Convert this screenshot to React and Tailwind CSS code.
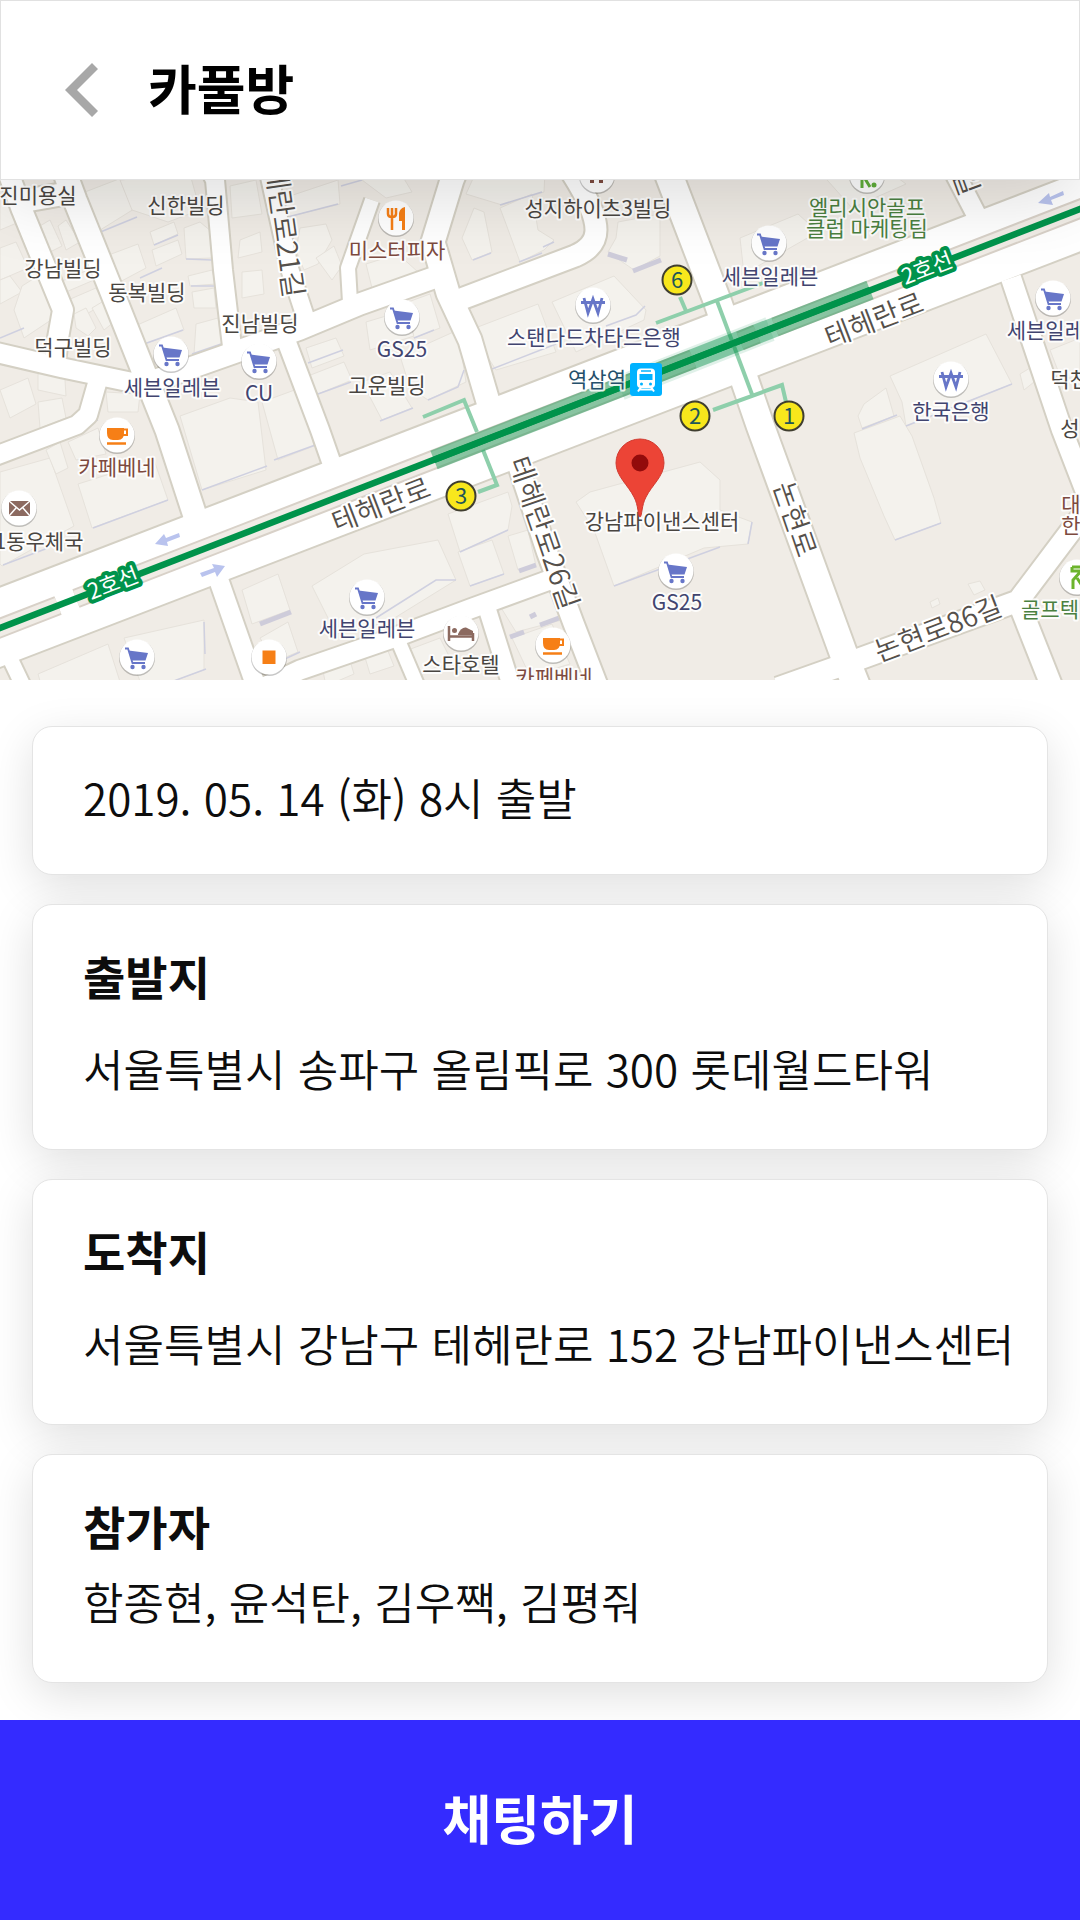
const ROADS = [
  { d: "M8 -8L22 30L63 130L58 158L54 190", w: 20 },
  { d: "M18 22L75 12", w: 22 },
  { d: "M62 -15L75 20L110 107L143 190L167 250L197 342", w: 23 },
  { d: "M-10 171L63 188L130 202L150 202", w: 19 },
  { d: "M98 200L88 235L77 245L-10 278", w: 18 },
  { d: "M145 204L233 173L300 149L360 124L436 97", w: 21 },
  { d: "M210 -10L215 0L223 90L233 175", w: 18 },
  { d: "M286 160L320 250L334 290", w: 18 },
  { d: "M268 -10L290 90L308 145", w: 17 },
  { d: "M372 20L348 88L350 122", w: 14 },
  { d: "M456 -10L452 0L433 62L448 113L470 160L489 225", w: 23 },
  { d: "M448 124L575 76Q596 67 596 50Q596 30 570 -10", w: 21 },
  { d: "M667 -10L718 123L760 245L844 475L860 515", w: 27 },
  { d: "M518 285L547 372L573 442L600 512", w: 20 },
  { d: "M555 398L470 429L393 458L300 490L262 508", w: 19 },
  { d: "M486 425L512 508", w: 17 },
  { d: "M397 458L420 512", w: 14 },
  { d: "M218 398L258 512", w: 19 },
  { d: "M6 470L26 512", w: 15 },
  { d: "M778 508L840 486L1018 421L1070 352L1096 318", w: 21 },
  { d: "M1018 421L1054 512", w: 21 },
  { d: "M1011 98L1062 250L1086 312", w: 20 },
  { d: "M950 -16L978 38", w: 19 },
  { d: "M-20 455L1100 24", w: 74 },
];

const MEDIANS = ["M-10 452L58 425.500", "M76 418.500L693 179", "M740 161L757 154", "M775 147L1100 21"];

const BUILDINGS = [
  "85 12L137 -8L150 10L142 24L97 52L84 22", "120 0L190 -6L200 30L168 42L132 30",
  "33 50L50 40L62 66L46 74", "58 46L66 40L80 62L66 70", "0 18L12 12L24 40L0 50",
  "0 68L16 62L28 88L0 100", "0 100L10 96L22 112L0 124", "22 106L38 96L56 130L54 138L24 158L14 130",
  "68 120L96 108L104 124L76 140", "60 102L88 90L94 100L66 112", "74 134L86 128L96 148L88 156L76 148",
  "92 128L102 122L114 142L104 150", "106 76L138 64L146 88L116 104L110 96",
  "150 52L174 42L178 54L154 65", "152 70L178 60L182 74L156 86", "135 146L176 128L184 150L144 164",
  "184 48L200 42L212 52L212 78L186 79", "188 96L212 90L216 104L190 106", "192 112L214 108L216 128L194 128",
  "196 144L218 138L222 164L194 174", "230 6L256 0L262 34L232 38", "240 60L260 52L262 72L238 78",
  "242 92L262 90L264 114L242 118", "278 20L338 0L340 24L276 40", "300 48L326 44L332 60L318 84L304 90L296 70",
  "316 78L334 66L342 86L332 100", "38 194L64 184L66 216L38 210", "0 210L28 198L36 224L10 238",
  "38 222L62 218L66 238L40 248", "106 212L140 214L138 232L108 232", "180 236L230 218L258 222L266 290L202 310",
  "262 222L300 208L314 266L278 280", "306 168L336 158L344 176L312 188", "308 196L344 182L352 200L318 214",
  "362 0L400 -8L412 12L386 18", "366 84L398 74L418 92L372 108", "366 142L406 130L414 156L370 170",
  "408 122L430 114L440 148L414 158", "400 176L458 150L466 202L428 220L410 208",
  "362 202L390 192L412 228L382 240", "476 -8L545 -8L544 12L502 25L466 14",
  "474 28L484 32L492 72L472 80L462 58", "500 28L532 14L538 50L554 60L544 70L520 82L506 44",
  "618 42L660 34L660 76L634 90L608 72L616 58", "470 150L538 124L556 172L496 190",
  "552 122L614 96L646 130L644 140L576 172", "740 58L798 34L818 52L744 94",
  "820 -8L890 -8L906 4L852 28", "890 196L986 154L1012 204L906 246L902 222",
  "858 236L864 224L886 208L894 236L862 248", "1020 194L1030 188L1034 202L1024 210",
  "1050 170L1080 158V200L1060 196", "0 292L50 278L74 346L2 386L0 384", "46 270L60 262L68 288L56 294",
  "68 262L98 248L106 274L76 280", "78 304L154 280L168 320L92 348", "242 410L278 394L290 430L252 444",
  "260 458L288 442L298 472L274 482", "38 494L108 464L122 508H42", "124 458L204 440L204 490L144 512",
  "312 406L364 374L438 360L456 400L388 442L336 454", "448 334L508 312L512 326L508 350L460 372",
  "458 372L492 360L504 394L470 406", "508 356L528 350L536 386L518 390", "500 426L550 400L562 440L516 452",
  "512 458L552 444L570 484L530 496", "576 322L590 312L700 282L720 300L720 330L752 342L748 364L704 368L614 406L594 350",
  "854 253L900 236L912 256L934 318L941 343L895 360L884 336L860 278", "968 404L980 401L985 410L974 415",
  "930 422L938 418L940 424L932 428", "408 470L440 458L452 482L416 494", "364 474L386 466L394 486L370 494",
  "322 486L348 474L354 494L326 506",
];

const SHADES = [
  "M98 53L137 37", "M140 98L162 88", "M154 65L178 55", "M186 79L212 80", "M191 106L214 106", "M144 164L183 150",
  "M192 174L224 163", "M276 40L338 24", "M341 6L362 0", "M308 183L343 170", "M318 214L351 202", "M0 158L24 148",
  "M202 310L267 286", "M274 280L318 264", "M93 348L168 320", "M3 385L48 368", "M473 80L491 73", "M519 82L542 73",
  "M543 67L554 62", "M414 158L434 150", "M428 220L458 207L464 190", "M380 241L413 228", "M492 189L556 164",
  "M606 146L636 135L645 126", "M500 25L542 12", "M885 74L920 60", "M906 246L1012 204", "M862 249L897 235",
  "M895 360L941 343", "M614 406L720 367", "M752 342L748 364", "M376 438L436 400L456 400", "M460 372L508 350",
  "M470 406L504 394", "M204 442L205 474", "M144 512L206 489", "M274 484L300 472", "M62 248L98 240",
];

const STRONG_SHADES = ["M608 74L627 80", "M633 91L661 80", "M260 444L291 432", "M519 391L536 385", "M510 457L524 452", "M540 445L559 438", "M530 437L536 434"];

const PASSAGES = [
  "M680 117L686 131", "M656 143L763 103", "M717 121L753 217", "M713 230L782 205L786 222",
  "M423 237L464 220L477 252", "M483 270L497 305L478 312",
];

const INK = "#494541";
const NAVY = "#41446f";
const BROWN = "#7d4a3f";
const GREEN = "#4a8040";

const LABELS = [
  ["진미용실", 38, 15, INK], ["신한빌딩", 186, 25, INK], ["강남빌딩", 63, 88, INK], ["동복빌딩", 147, 112, INK],
  ["진남빌딩", 260, 143, INK], ["덕구빌딩", 73, 167, INK], ["세븐일레븐", 172, 207, NAVY], ["CU", 259, 213, NAVY],
  ["GS25", 402, 169, NAVY], ["고운빌딩", 387, 205, INK], ["미스터피자", 397, 70, BROWN],
  ["성지하이츠3빌딩", 598, 28, INK], ["스탠다드차타드은행", 594, 157, NAVY], ["역삼역", 597, 199, "#24506b"],
  ["엘리시안골프", 867, 27, GREEN], ["클럽 마케팅팀", 867, 48, GREEN], ["세븐일레븐", 770, 96, NAVY],
  ["세븐일레븐", 1055, 150, NAVY], ["한국은행", 951, 231, NAVY], ["덕천빌딩", 1089, 199, INK], ["성", 1070, 248, INK],
  ["대", 1071, 324, BROWN], ["한", 1071, 345, BROWN], ["골프텍", 1050, 429, GREEN], ["카페베네", 117, 287, BROWN],
  ["1동우체국", 39, 361, INK], ["세븐일레븐", 367, 448, NAVY], ["스타호텔", 461, 484, INK],
  ["카페베네", 554, 497, BROWN], ["강남파이낸스센터", 662, 341, INK], ["GS25", 677, 422, NAVY],
];

const ROAD_LABELS = [
  ["테헤란로", 874, 140, -21, 28], ["테헤란로", 381, 325, -21, 28], ["테헤란로26길", 544, 353, 71, 28],
  ["테헤란로21길", 283, 38, 82, 28], ["논현로", 795, 339, 71, 28], ["논현로86길", 938, 449, -21, 28], ["길", 966, 2, 70, 28],
];

const CARTS = [[171, 174], [259, 181], [402, 137], [769, 63], [1053, 118], [137, 477], [367, 417], [676, 391]];
const WONS = [[593, 125], [951, 199]];
const CUPS = [[117, 255], [553, 465]];
const EXITS = [["6", 677, 100], ["2", 695, 236], ["1", 789, 236], ["3", 461, 316]];

function Spot({ x, y, children }) {
  return (
    <g transform={`translate(${x} ${y})`}>
      <circle cy="1" r="18" fill="#000" opacity="0.22" />
      <circle r="17.500" fill="#fff" />
      {children}
    </g>
  );
}

function StreetMap() {
  return (
    <svg
      viewBox="0 0 1080 500"
      role="img"
      aria-label="강남파이낸스센터 주변 지도"
      className="block h-auto w-full bg-[#f0ece6] font-['Noto_Sans_CJK_KR','Noto_Sans',sans-serif]"
    >
      <g fill="#f4f2ed" stroke="#e6e2db" strokeWidth="1">
        {BUILDINGS.map((p) => <path key={p} d={`M${p}Z`} />)}
      </g>
      <g fill="none" stroke="#cfd0e0" strokeWidth="1.500">
        {SHADES.map((d) => <path key={d} d={d} />)}
      </g>
      <g fill="none" stroke="#ceccda" strokeWidth="5">
        {STRONG_SHADES.map((d) => <path key={d} d={d} />)}
      </g>
      <g fill="none" stroke="#d4d0c4" strokeLinejoin="round">
        {ROADS.map((r) => <path key={r.d} d={r.d} strokeWidth={r.w + 4} />)}
      </g>
      <g fill="none" stroke="#fff" strokeLinejoin="round">
        {ROADS.map((r) => <path key={r.d} d={r.d} strokeWidth={r.w} />)}
      </g>
      <g fill="none">
        {MEDIANS.map((d) => <path key={d} d={d} stroke="#d8d1c8" strokeWidth="20" />)}
        {MEDIANS.map((d) => <path key={d} d={d} stroke="#f0ece6" strokeWidth="16" />)}
      </g>
      <path d="M-5 450L1085 27" stroke="#00934b" strokeWidth="6.500" />
      <g fill="none" stroke="#8ecfab" strokeWidth="4">
        {PASSAGES.map((d) => <path key={d} d={d} />)}
      </g>
      <path d="M434 280L870 110" stroke="#008f46" strokeOpacity="0.43" strokeWidth="20" />
      <path d="M620 208L770 149" stroke="#008f46" strokeOpacity="0.12" strokeWidth="25" />
      <path d="M434 280L870 110" stroke="#00934b" strokeWidth="6.500" />

      <g fill="#b9c3ee">
        <path d="M155 364L164 354L166 358L179 353L180 357L167 362L168 366Z" />
        <path d="M225 386L212 384L214 388L200 393L202 397L215 392L217 397Z" />
        <path d="M1038 23L1049 13L1050 17L1063 11L1064 15L1051 20L1053 25Z" />
      </g>

      {ROAD_LABELS.map(([t, x, y, a, s]) => (
        <text key={t + x} transform={`translate(${x} ${y}) rotate(${a})`} y={10} fontSize={s} textAnchor="middle" fill="#55504b" fontWeight="350" stroke="#fff" strokeWidth="4" strokeLinejoin="round" paintOrder="stroke">
          {t}
        </text>
      ))}
      {[[927, 88], [113, 403]].map(([x, y]) => (
        <text key={x} transform={`translate(${x} ${y}) rotate(-21)`} y={8} fontSize={22} textAnchor="middle" fill="#fff" stroke="#00934b" strokeWidth="8" strokeLinejoin="round" paintOrder="stroke">
          2호선
        </text>
      ))}

      {CARTS.map(([x, y]) => (
        <Spot key={`${x}-${y}`} x={x} y={y}>
          <path d="M-12 -8.500H-9L-4.500 6H8" fill="none" stroke="#6776c8" strokeWidth="1.800" />
          <path d="M-8.500 -6.500L11 -4L8.500 3.500H-5.500Z" fill="#6776c8" />
          <circle cx="-4.500" cy="10" r="2.200" fill="#6776c8" />
          <circle cx="6.500" cy="10" r="2.200" fill="#6776c8" />
        </Spot>
      ))}
      {WONS.map(([x, y]) => (
        <Spot key={`${x}-${y}`} x={x} y={y}>
          <path d="M-9 -7L-5 8L0 -6L5 8L9 -7M-12 -2.500H12" fill="none" stroke="#6776c8" strokeWidth="2.800" />
        </Spot>
      ))}
      {CUPS.map(([x, y]) => (
        <Spot key={`${x}-${y}`} x={x} y={y}>
          <path d="M-10 -7H7V-2Q7 5 1 5H-4Q-10 5 -10 -2Z" fill="#f67f16" />
          <path d="M6 -5.500H10V0H6" fill="none" stroke="#f67f16" strokeWidth="2" />
          <path d="M-10 8.500H9" stroke="#f67f16" strokeWidth="2.500" />
        </Spot>
      ))}
      <Spot x={396} y={38}>
        <path d="M-8 -10V-4Q-8 -1 -4 -1Q0 -1 0 -4V-10M-4 -10V12" fill="none" stroke="#f67f16" strokeWidth="2.500" />
        <path d="M3 -5Q4 -10 9 -11V12H6V3H3Z" fill="#f67f16" />
      </Spot>
      <Spot x={19} y={328}>
        <path d="M-10 -7H11V8H-10Z" fill="#8c6a60" />
        <path d="M-10 -7L0.500 2L11 -7M-10 8L-3 0M11 8L4 0" fill="none" stroke="#fff" strokeWidth="1.500" />
      </Spot>
      <Spot x={269} y={477}>
        <path d="M-6.500 -6.500H6.500V7H-6.500Z" fill="#f67f16" />
      </Spot>
      <Spot x={461} y={453}>
        <path d="M-12 -7V8M-12 3.500H12M12 0V8" fill="none" stroke="#8c6a60" strokeWidth="2.500" />
        <path d="M-3 1Q0 -6 5 -5.500L12 -2V2H-3Z" fill="#8c6a60" />
        <circle cx="-6.500" cy="-2.500" r="2.500" fill="#8c6a60" />
      </Spot>
      <Spot x={597} y={-5}>
        <path d="M-5 0V8M4 0V8" stroke="#7d4a3f" strokeWidth="4" />
      </Spot>
      <Spot x={867} y={-5}>
        <path d="M-5 -3V13M-3 2L3 12" stroke="#5fae3a" strokeWidth="3" />
        <circle cx="7" cy="10" r="2.500" fill="#5fae3a" />
      </Spot>
      <Spot x={1077} y={397}>
        <path d="M-5 -10H6M-5 -10V-6H4L-4 3V12M0 1L6 10" fill="none" stroke="#6cb42d" strokeWidth="3" />
      </Spot>

      {EXITS.map(([n, x, y]) => (
        <g key={n}>
          <circle cx={x} cy={y} r="14.500" fill="#f8e71c" stroke="#3f3e30" strokeWidth="2" />
          <text x={x} y={y + 8} fontSize="22" textAnchor="middle" fill="#1f5558">{n}</text>
        </g>
      ))}

      {LABELS.map(([t, x, y, c]) => (
        <text key={t + x} x={x} y={y + 8} fontSize="21" textAnchor="middle" fill={c} stroke="#fff" strokeOpacity="0.850" strokeWidth="4" strokeLinejoin="round" paintOrder="stroke">
          {t}
        </text>
      ))}

      <g transform="translate(630 183)">
        <rect width="32" height="33" rx="3" fill="#00b2ff" />
        <path d="M11 5.500H21Q25 5.500 25 9.500V21Q25 25 21 25H11Q7 25 7 21V9.500Q7 5.500 11 5.500Z" fill="#fff" />
        <path d="M11 8H21" stroke="#00b2ff" strokeWidth="1.500" />
        <path d="M9.500 11H22.500V17H9.500Z" fill="#00b2ff" />
        <circle cx="11.500" cy="21" r="1.500" fill="#00b2ff" />
        <circle cx="20.500" cy="21" r="1.500" fill="#00b2ff" />
        <path d="M11 24L8 28.500M21 24L24 28.500M9.500 26.500H22.500" stroke="#fff" strokeWidth="2" />
      </g>

      <path d="M640 337C638 337 638.500 325 634 317C628 305 616 296 616 283A24 24 0 0 1 664 283C664 296 652 305 646 317C641.500 325 642 337 640 337Z" fill="#ec4436" stroke="#d13a30" strokeWidth="1" />
      <circle cx="640" cy="283" r="8.500" fill="#930b0b" />
    </svg>
  );
}

const CARD =
  "relative rounded-[20px] border border-[#e4e4e4] bg-white pr-6 pl-[50px] before:absolute before:inset-0 before:-z-10 before:rounded-[20px] before:shadow-[0_12px_46px_rgba(0,0,0,0.13)]";

function InfoCard({ title, children, gap }) {
  return (
    <section className={`${CARD} pt-10 pb-[51px]`}>
      <h2 className="text-[46px] leading-[60px] font-bold">{title}</h2>
      <p className={`${gap} text-[44px] leading-[60px] font-[350]`}>{children}</p>
    </section>
  );
}

export default function App() {
  return (
    <div className="flex min-h-screen flex-col bg-white font-['Noto_Sans_CJK_KR','Noto_Sans',sans-serif] text-[#0d0d0d]" lang="ko">
      <header className="relative z-10 flex h-[180px] items-center gap-[50px] border border-[#e1e1e1] bg-white px-16 shadow-[0_20px_70px_rgba(0,0,0,0.13)]">
        <button type="button" aria-label="뒤로" className="shrink-0">
          <svg viewBox="0 0 33 54" className="block h-[54px] w-[33px]" fill="#a8a8a8">
            <path d="M0 27L27 0L33 6L12 27L33 48L27 54Z" />
          </svg>
        </button>
        <h1 className="pb-1.5 text-[53px] leading-[72px] font-bold text-black">카풀방</h1>
      </header>

      <StreetMap />

      <main className="isolate flex grow flex-col gap-[29px] px-8 pt-[46px] pb-9">
        <section className={`${CARD} pt-10 pb-[47px]`}>
          <p className="text-[44px] leading-[60px] font-[350]">2019. 05. 14 (화) 8시 출발</p>
        </section>
        <InfoCard title="출발지" gap="mt-[33px]">서울특별시 송파구 올림픽로 300 롯데월드타워</InfoCard>
        <InfoCard title="도착지" gap="mt-[33px]">서울특별시 강남구 테헤란로 152 강남파이낸스센터</InfoCard>
        <InfoCard title="참가자" gap="mt-4">함종현, 윤석탄, 김우짹, 김평줘</InfoCard>
      </main>

      <button type="button" className="relative h-[200px] w-full shrink-0 bg-[#342bff] pb-1.5 text-[53px] leading-[72px] font-bold text-white">
        채팅하기
      </button>
    </div>
  );
}
